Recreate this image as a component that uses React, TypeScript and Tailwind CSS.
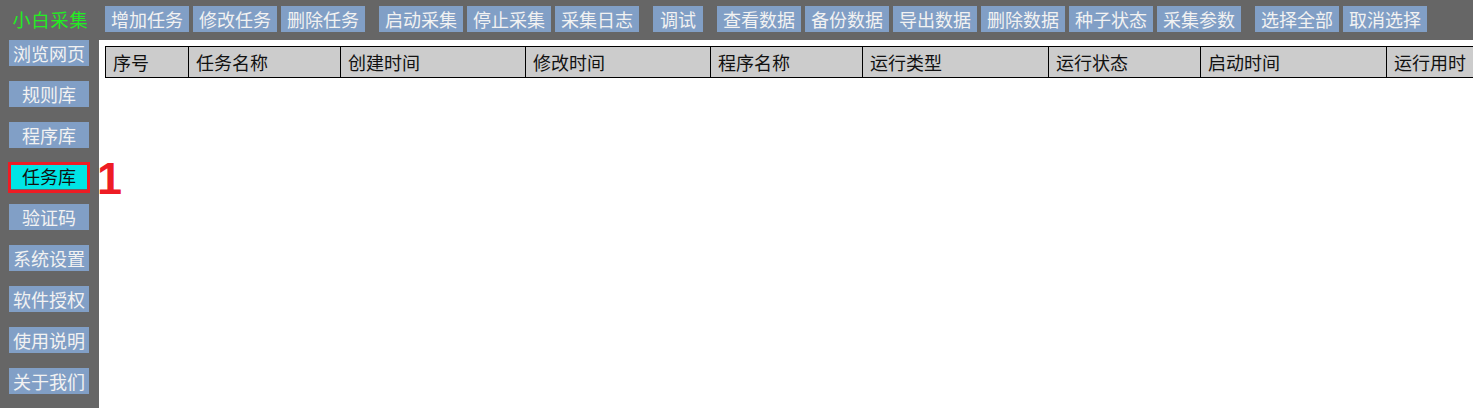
import React from "react";

const groups: { label: string; w: number }[][] = [
  [
    { label: "增加任务", w: 84 },
    { label: "修改任务", w: 84 },
    { label: "删除任务", w: 84 },
  ],
  [
    { label: "启动采集", w: 84 },
    { label: "停止采集", w: 84 },
    { label: "采集日志", w: 84 },
  ],
  [{ label: "调试", w: 50 }],
  [
    { label: "查看数据", w: 84 },
    { label: "备份数据", w: 84 },
    { label: "导出数据", w: 84 },
    { label: "删除数据", w: 84 },
    { label: "种子状态", w: 84 },
    { label: "采集参数", w: 84 },
  ],
  [
    { label: "选择全部", w: 84 },
    { label: "取消选择", w: 84 },
  ],
];

const side = ["浏览网页", "规则库", "程序库", "任务库", "验证码", "系统设置", "软件授权", "使用说明", "关于我们"];

const cols: { label: string; w: number }[] = [
  { label: "序号", w: 83 },
  { label: "任务名称", w: 152 },
  { label: "创建时间", w: 185 },
  { label: "修改时间", w: 185 },
  { label: "程序名称", w: 152 },
  { label: "运行类型", w: 186 },
  { label: "运行状态", w: 152 },
  { label: "启动时间", w: 186 },
  { label: "运行用时", w: 186 },
];

export default function App() {
  return (
    <div
      className="relative w-[1473px] h-[408px] overflow-hidden bg-[#666666] flex flex-col"
      style={{ fontFamily: '"Noto Sans CJK SC", "Liberation Sans", sans-serif' }}
    >
      <div className="h-[40px] flex items-start shrink-0">
        <div className="w-[99px] h-[40px] flex items-center justify-center text-[18px] text-[#22ee22] tracking-[1px] pb-[2px] pl-[2px]">
          小白采集
        </div>
        <div className="flex gap-[14px] pt-[6px] ml-[6px]">
          {groups.map((g, i) => (
            <div key={i} className="flex gap-[4px]">
              {g.map((b) => (
                <div
                  key={b.label}
                  className="h-[26px] bg-[#819fc6] text-[#f2f2f2] text-[18px] leading-[26px] flex items-center justify-center"
                  style={{ width: b.w }}
                >
                  {b.label}
                </div>
              ))}
            </div>
          ))}
        </div>
      </div>
      <div className="flex flex-1 min-h-0">
        <div className="w-[99px] shrink-0 flex flex-col gap-[15px] pl-[9px]">
          {side.map((s) => (
            <div
              key={s}
              className={
                "w-[80px] h-[26px] text-[18px] flex items-center justify-center " +
                (s === "任务库" ? "bg-[#00e5e5] text-[#111111]" : "bg-[#819fc6] text-[#f2f2f2]")
              }
            >
              {s}
            </div>
          ))}
        </div>
        <div className="flex-1 bg-white pt-[6px] pl-[6px] overflow-hidden">
          <div className="flex h-[32px] border-y border-l border-black bg-[#cccccc] w-max">
            {cols.map((c) => (
              <div
                key={c.label}
                className="h-full border-r border-black flex items-center pl-[7px] text-[18px] text-[#111111] shrink-0"
                style={{ width: c.w }}
              >
                {c.label}
              </div>
            ))}
          </div>
        </div>
      </div>
      <div className="absolute left-[8px] top-[162px] w-[82px] h-[31px] border-[3px] border-[#ee1c24]" />
      <div
        className="absolute left-[97px] top-[156px] text-[#ee1c24] text-[45px] font-bold leading-none"
        style={{ fontFamily: '"Liberation Sans", sans-serif' }}
      >
        1
      </div>
    </div>
  );
}
